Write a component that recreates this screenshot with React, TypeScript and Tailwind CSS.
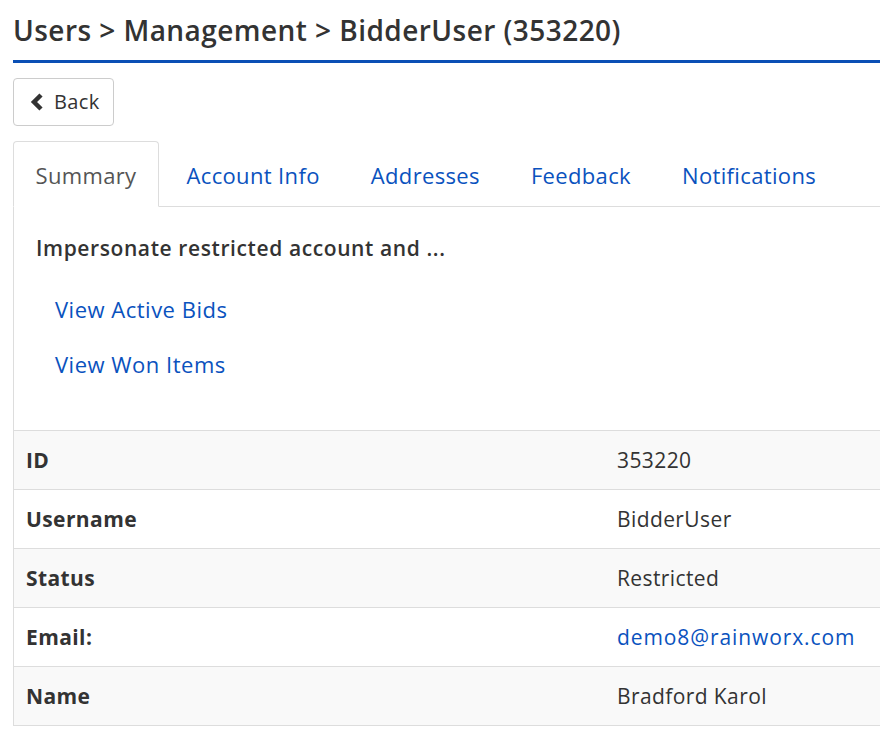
const ROWS: { label: string; value: string; link?: boolean }[] = [
  { label: 'ID', value: '353220' },
  { label: 'Username', value: 'BidderUser' },
  { label: 'Status', value: 'Restricted' },
  { label: 'Email:', value: 'demo8@rainworx.com', link: true },
  { label: 'Name', value: 'Bradford Karol' },
]

const TABS = ['Account Info', 'Addresses', 'Feedback', 'Notifications']

export default function App() {
  return (
    <div
      className="min-h-[740px] w-[880px] overflow-hidden bg-white pl-[13px] text-[#333]"
      style={{ fontFamily: '"Segoe UI", "Open Sans", sans-serif' }}
    >
      <h1 className="flex h-[60px] items-center text-[28px] font-semibold tracking-[0.45px]">
        Users &gt; Management &gt; BidderUser (353220)
      </h1>
      <div className="h-[3px] w-[900px] bg-[#0a4fb5]" />

      <button className="mt-[15px] flex h-[48px] w-[101px] items-center gap-[10px] rounded-[4px] border border-[#ccc] pl-[16px] text-[20px] tracking-[0.4px]">
        <svg width="14" height="18" viewBox="0 0 14 18">
          <polyline points="11,2 4,9 11,16" fill="none" stroke="#333" strokeWidth="4.5" strokeLinejoin="miter" />
        </svg>
        Back
      </button>

      <div className="mt-[15px] flex h-[66px] w-[900px] border-b border-[#ddd] tracking-[0.35px]">
        <div className="-mb-px flex w-[146px] items-center justify-center rounded-t-[4px] border border-b-white border-[#ddd] bg-white pt-[2px] text-[22px] text-[#555]">
          Summary
        </div>
        <div className="w-[2px]" />
        {TABS.map((t) => (
          <div key={t} className="flex items-center px-[25.5px] pt-[3px] text-[22px] text-[#0a52be]">
            {t}
          </div>
        ))}
      </div>

      <div className="w-[900px] border-l border-[#ddd]">
        <div className="pb-[49px] pl-[22px] pt-[26px]">
          <div className="text-[21px] font-semibold tracking-[0.6px]">Impersonate restricted account and ...</div>
          <div className="mt-[28px] flex flex-col gap-[22px] pl-[19px] text-[22px] tracking-[0.5px] text-[#0a52be]">
            <a>View Active Bids</a>
            <a>View Won Items</a>
          </div>
        </div>

        <div className="border-t border-[#ddd]">
          {ROWS.map((r, i) => (
            <div
              key={r.label}
              className={`flex h-[59px] items-center border-b border-[#ddd] pt-[2px] text-[21px] tracking-[0.4px] ${i % 2 === 0 ? 'bg-[#f9f9f9]' : 'bg-white'}`}
            >
              <div className="w-[603px] pl-[12px] font-bold">{r.label}</div>
              <div className={r.link ? 'tracking-[0.9px] text-[#0a52be]' : ''}>{r.value}</div>
            </div>
          ))}
        </div>
      </div>
    </div>
  )
}
